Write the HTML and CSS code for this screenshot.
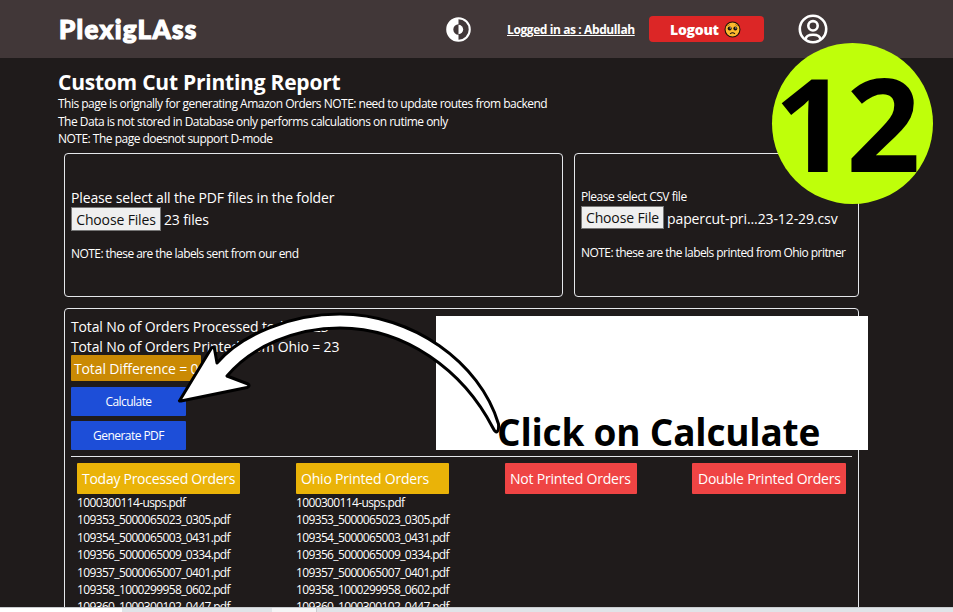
FILE: index.html
```html
<!DOCTYPE html>
<html lang="en">
<head>
<meta charset="utf-8">
<title>Custom Cut Printing Report</title>
<link rel="stylesheet" href="styles.css">
</head>
<body>
<header class="topbar">
  <div class="logo">PlexigLAss</div>
  <svg class="theme-icon" viewBox="0 0 24 24" width="25" height="25">
    <circle cx="12" cy="12" r="10.8" fill="none" stroke="#fff" stroke-width="2"/>
    <path d="M12 1A11 11 0 0 0 12 23V17A5 5 0 0 1 12 7Z" fill="#fff"/>
    <path d="M12 7.500A4.500 4.500 0 0 1 12 16.500Z" fill="#fff"/>
  </svg>
  <a class="user">Logged in as : Abdullah</a>
  <button class="logout">Logout
    <svg viewBox="0 0 18 18" width="17" height="17">
      <circle cx="9" cy="9" r="7.9" fill="#fdb92e" stroke="#1a1208" stroke-width="1.1"/>
      <circle cx="6" cy="8" r="2.1" fill="#16110c"/>
      <circle cx="12" cy="8" r="2.1" fill="#16110c"/>
      <circle cx="6.6" cy="7.3" r=".6" fill="#fff"/>
      <circle cx="12.6" cy="7.3" r=".6" fill="#fff"/>
      <path d="M3.6 5Q5 4.700 6 3.600M14.400 5Q13 4.700 12 3.600" stroke="#8a5a10" stroke-width=".8" fill="none"/>
      <path d="M6.400 13.600Q9 11.300 11.600 13.600" stroke="#16110c" stroke-width="1.1" fill="none"/>
    </svg>
  </button>
  <svg class="avatar" viewBox="0 0 30 30" width="30" height="30">
    <circle cx="15" cy="15" r="13.200" fill="none" stroke="#fff" stroke-width="2.600"/>
    <circle cx="15" cy="11.800" r="4.700" fill="none" stroke="#fff" stroke-width="2.600"/>
    <path d="M7.500 25.300C8 21.500 11 20.700 15 20.700S22 21.500 22.500 25.300" fill="none" stroke="#fff" stroke-width="2.600"/>
  </svg>
</header>

<main class="page">
  <h1>Custom Cut Printing Report</h1>
  <p class="small">This page is orignally for generating Amazon Orders NOTE: need to update routes from backend</p>
  <p class="small">The Data is not stored in Database only performs calculations on rutime only</p>
  <p class="small">NOTE: The page doesnot support D-mode</p>

  <div class="uploads">
    <section class="panel pdf">
      <div class="label">Please select all the PDF files in the folder</div>
      <div class="file"><span class="choose">Choose Files</span><span>23 files</span></div>
      <p class="small note">NOTE: these are the labels sent from our end</p>
    </section>
    <section class="panel csv">
      <div class="label">Please select CSV file</div>
      <div class="file"><span class="choose">Choose File</span><span class="name">papercut-pri...23-12-29.csv</span></div>
      <p class="small note">NOTE: these are the labels printed from Ohio pritner</p>
    </section>
  </div>

  <section class="panel results">
    <div class="total">Total No of Orders Processed today = 23</div>
    <div class="total">Total No of Orders Printed from Ohio = 23</div>
    <div class="difference">Total Difference = 0</div>
    <button class="action">Calculate</button>
    <button class="action">Generate PDF</button>
    <div class="columns">
      <div class="col processed">
        <h2>Today Processed Orders</h2>
        <ul><li>1000300114-usps.pdf</li><li>109353_5000065023_0305.pdf</li><li>109354_5000065003_0431.pdf</li><li>109356_5000065009_0334.pdf</li><li>109357_5000065007_0401.pdf</li><li>109358_1000299958_0602.pdf</li><li>109360_1000300102_0447.pdf</li></ul>
      </div>
      <div class="col ohio">
        <h2>Ohio Printed Orders</h2>
        <ul><li>1000300114-usps.pdf</li><li>109353_5000065023_0305.pdf</li><li>109354_5000065003_0431.pdf</li><li>109356_5000065009_0334.pdf</li><li>109357_5000065007_0401.pdf</li><li>109358_1000299958_0602.pdf</li><li>109360_1000300102_0447.pdf</li></ul>
      </div>
      <div class="col missing"><h2>Not Printed Orders</h2></div>
      <div class="col double"><h2>Double Printed Orders</h2></div>
    </div>
  </section>
</main>

<div class="taskbar"><span class="tab"></span><span class="gap"></span><span class="tab-light"></span></div>

<div class="callout-box"></div>
<svg class="arrow" viewBox="170 305 340 135" width="340" height="135">
  <path d="M180 400L211.500 348Q213.500 346 214.500 349L217 363C241 335 290 314 340 314C412 314 480 362 498.500 424Q499 431 496.500 432Q495 432 493 428C463 370 405 328 340 328C296 328 252 346 227 376L248 384Q250.500 386 247 387.500L181 401Q178.500 401.500 180 400Z" fill="#fff" stroke="#000" stroke-width="3" stroke-linejoin="round"/>
</svg>
<div class="callout-text">Click on Calculate</div>
<div class="step">12</div>
</body>
</html>
```
FILE: styles.css
```css
* { box-sizing: border-box; margin: 0; padding: 0; }
body {
  position: relative;
  width: 953px;
  height: 612px;
  overflow: hidden;
  background: #1f1b1b;
  color: #fff;
  font-family: "Open Sans", "Noto Sans", sans-serif;
  font-size: 14px;
}
button { border: 0; color: #fff; font-family: inherit; }

.topbar {
  display: flex;
  align-items: center;
  height: 58px;
  padding-left: 59px;
  background: #413738;
}
.logo {
  width: 387px;
  font: 900 26px/34px Lato, sans-serif;
  letter-spacing: 1.3px;
  -webkit-text-stroke: 1.2px #fff;
}
.theme-icon { margin-right: 36px; }
.user {
  width: 142px;
  font-size: 12px;
  font-weight: 700;
  letter-spacing: -.4px;
  text-decoration: underline;
  white-space: nowrap;
}
.logout {
  display: flex;
  align-items: center;
  gap: 5px;
  width: 115px;
  height: 26px;
  padding: 1px 0 0 21px;
  border-radius: 4px;
  background: #dc2626;
  font-size: 14px;
  font-weight: 800;
  letter-spacing: -.25px;
}
.avatar { margin-left: 34px; }

.page { padding: 10px 0 0 58px; }
h1 { height: 27px; font-size: 21px; line-height: 29px; letter-spacing: -.23px; }
.small { font-size: 12px; line-height: 17.5px; letter-spacing: -.51px; white-space: nowrap; }

.panel { border: 1px solid #e5e7eb; border-radius: 4px; }
.uploads { display: flex; gap: 11px; margin: 5.5px 0 0 6px; }
.uploads .panel { height: 144px; padding: 33px 0 0 6px; }
.pdf { width: 499px; }
.csv { width: 285px; }
.label, .file, .total { letter-spacing: -.14px; white-space: nowrap; }
.pdf .label { height: 20px; line-height: 22px; }
.csv .label { font-size: 12px; line-height: 19px; letter-spacing: -.46px; }
.file { display: flex; align-items: center; gap: 3px; height: 24px; }
.csv .file { height: 23px; }
.name { padding-top: 2px; letter-spacing: -.1px; }
.choose {
  display: flex;
  align-items: center;
  justify-content: center;
  width: 90px;
  height: 100%;
  border: 1px solid #767676;
  background: #efefef;
  color: #111;
}
.csv .choose { width: 83px; }
.note { margin-top: 14px; letter-spacing: -.56px; }
.csv .note { margin-top: 15px; }

.results { width: 795px; height: 320px; margin: 11px 0 0 6px; padding: 7px 6px 0; }
.total { height: 20px; line-height: 21px; }
.total + .difference { margin-top: -1px; }
.difference {
  width: 130px;
  height: 26px;
  padding-left: 3px;
  border-radius: 1px;
  background: #ca8a04;
  line-height: 27px;
  letter-spacing: -.13px;
  white-space: nowrap;
}
.action {
  display: block;
  width: 115px;
  height: 29px;
  margin-top: 6px;
  border-radius: 1px;
  background: #1d4ed8;
  font-size: 12px;
  letter-spacing: -.55px;
}
.action + .action { margin-top: 5px; }
.columns {
  display: grid;
  grid-template-columns: 163px 153px 132px 154px;
  column-gap: 56px;
  margin-top: 6px;
  padding: 6px 0 0 6px;
  border-top: 1px solid #e5e7eb;
}
.col h2 {
  height: 31px;
  padding-left: 5px;
  border-radius: 1px;
  font-size: 14px;
  font-weight: 400;
  line-height: 32px;
  letter-spacing: -.27px;
  white-space: nowrap;
}
.ohio h2, .missing h2 { letter-spacing: -.2px; }
.double { margin-left: -1px; width: 154px; }
.double h2 { padding-left: 6px; letter-spacing: -.23px; }
.processed h2, .ohio h2 { background: #eab308; }
.missing h2, .double h2 { background: #ef4444; }
.col ul { list-style: none; }
.col li { font-size: 12px; line-height: 17.4px; letter-spacing: -.64px; white-space: nowrap; }

.taskbar {
  position: absolute;
  left: 0;
  bottom: 0;
  display: flex;
  width: 953px;
  height: 5px;
  border-top: 1px solid #c9cccf;
  background: #dfe4e8;
}
.tab { width: 122px; background: #fff; }
.gap { width: 150px; }
.tab-light { width: 45px; border-right: 1px solid #c9cccf; background: #f4f5f6; }

.callout-box { position: absolute; left: 436px; top: 316px; width: 432px; height: 134px; background: #fff; }
.arrow { position: absolute; left: 170px; top: 305px; }
.callout-text {
  position: absolute;
  left: 497px;
  top: 407px;
  color: #000;
  font-size: 37px;
  font-weight: 700;
  line-height: 50px;
  letter-spacing: -.2px;
  white-space: nowrap;
}
.step {
  position: absolute;
  left: 772px;
  top: 43px;
  width: 161px;
  height: 161px;
  padding-left: 2px;
  border-radius: 50%;
  background: #bfff0a;
  color: #000;
  font-size: 130px;
  font-weight: 700;
  line-height: 157px;
  letter-spacing: -2px;
}
```
